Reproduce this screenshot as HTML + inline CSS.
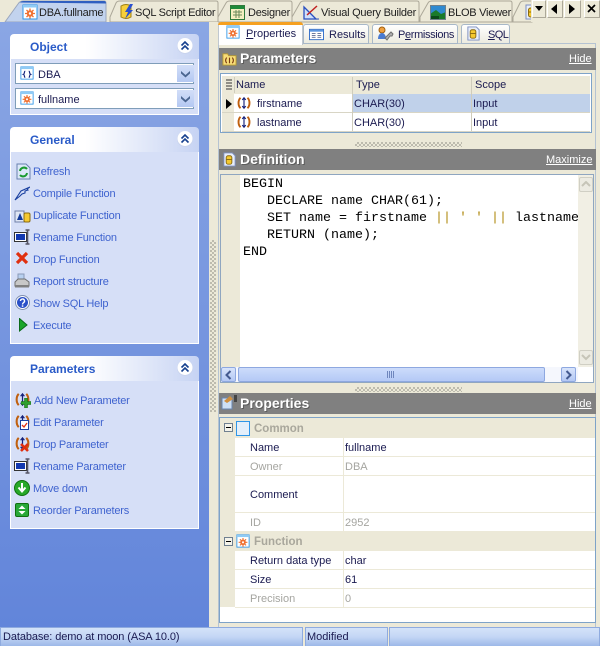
<!DOCTYPE html>
<html><head><meta charset="utf-8">
<style>
html,body{margin:0;padding:0}
#r{position:relative;width:600px;height:646px;overflow:hidden;background:#ece9d8;font:11px/14px "Liberation Sans",sans-serif;color:#000}
#r div,#r svg{position:absolute}
.t{white-space:nowrap}
.lnk{color:#3f63cf;font-size:11px;left:33px;letter-spacing:-.2px;margin-top:1px}
.tb{font-size:11px;color:#202020;top:6px;letter-spacing:-.25px}
.pnl{left:10px;width:189px;background:#d6dff7;border-left:1px solid #fff;border-right:1px solid #fff;border-bottom:1px solid #fff;box-sizing:border-box}
.ph{left:10px;width:189px;height:25px;border-radius:4px 4px 0 0;background:linear-gradient(90deg,#fff 40%,#c6d3f3)}
.pt{left:30px;color:#2a5bc8;font-weight:bold;font-size:12px}
.cb{left:15px;width:177px;height:19px;background:#fff;border:1px solid #7f9db9}
.bar{left:219px;width:377px;background:#808080}
.bart{left:240px;color:#fff;font-weight:bold;font-size:14px;text-shadow:1px 1px 0 #5c5c5c}
.barl{color:#fff;text-decoration:underline;font-size:11px}
.dots{height:5px;background:repeating-conic-gradient(#bdbbae 0 25%,#ece9d8 0 50%) 0 0/4px 4px}
.code{left:243px;font:13.33px/17px "Liberation Mono",monospace;white-space:pre}
.code b{font-weight:normal;color:#b08a10}
.pn{left:250px;margin-top:1px}.pv{left:345px;margin-top:1px}.g{color:#a5a5a0}
.gh{color:#a9a79c;font-weight:bold;font-size:11.5px;left:254px;margin-top:1px}
.st{top:627px;height:19px;background:linear-gradient(#d4e3f9,#c3d6f5 50%,#9db8e8);border:1px solid #8fabdf;border-bottom:0;box-sizing:border-box}
.btn{top:0;height:18px;background:#ece9d8;border:1px solid #fff;border-right-color:#aca899;border-bottom-color:#aca899;box-sizing:border-box}
.gridt{color:#1a1a50}
.drop{width:17px;height:17px;background:linear-gradient(#d2def8,#b4c8f2);top:0}
</style></head><body><div id="r">
<svg width="0" height="0" style="left:0;top:0"><defs>
<symbol id="fn" viewBox="0 0 16 16"><rect x="1" y="1" width="14" height="14" fill="#fff" stroke="#2f96e8"/><rect x="1" y="1" width="14" height="2.500" fill="#8fcbf5"/><circle cx="8" cy="9.500" r="3.200" fill="#f07030"/><path d="M8 4.500v10M3 9.500h10M4.500 6l7 7M11.500 6l-7 7" stroke="#f07030" stroke-width="1.300"/><circle cx="8" cy="9.500" r="1.200" fill="#fff"/></symbol>
<symbol id="sch" viewBox="0 0 16 16"><rect x="1" y="1" width="14" height="14" fill="#fff" stroke="#2f96e8"/><rect x="1" y="1" width="14" height="2.500" fill="#8fcbf5"/><path d="M6 6C4.500 6 5.500 9 4 9.500 5.500 10 4.500 13 6 13M10 6c1.500 0 .5 3 2 3.500C10.500 10 11.500 13 10 13" fill="none" stroke="#10207a" stroke-width="1.300"/></symbol>
<symbol id="par" viewBox="0 0 16 16"><path d="M4 2C1 5 1 11 4 14M12 2c3 3 3 9 0 12" fill="none" stroke="#c0600f" stroke-width="2.200"/><path d="M8 2v12M6 4.500 8 2l2 2.500M6 11.500 8 14l2-2.500" fill="none" stroke="#14207a" stroke-width="1.300"/></symbol>
<symbol id="sql" viewBox="0 0 16 16"><path d="M2 1h9l3 3v11H2z" fill="#e8eefa" stroke="#7d8fc0"/><rect x="4.500" y="4" width="6" height="9" rx="2" fill="#f5c92f" stroke="#8a6a10"/><path d="M4.500 8h6" stroke="#8a6a10"/></symbol>
<symbol id="fold" viewBox="0 0 16 16"><path d="M1 3h5l1 2h8v10H1z" fill="#f7dc78" stroke="#b89a30"/><path d="M5 7C3.500 9 3.500 11 5 13M11 7c1.500 2 1.500 4 0 6M8 7v6" fill="none" stroke="#7a3a10" stroke-width="1.200"/></symbol>
<symbol id="res" viewBox="0 0 16 16"><rect x=".5" y="2.500" width="15" height="11" fill="#fff" stroke="#2f6cc8"/><rect x="1" y="3" width="14" height="2" fill="#5a96e0"/><path d="M3 7h4M3 9h4M3 11h4M9 7h4M9 9h4M9 11h4" stroke="#5a6a90"/></symbol>
<symbol id="perm" viewBox="0 0 18 16"><circle cx="5" cy="4" r="3" fill="#f0a040" stroke="#a06010"/><path d="M1 13c0-4 2-6 4-6s4 2 4 6z" fill="#4a7ad0"/><path d="M8 12l6-6 2 2-1 2-2 0-3 4z" fill="#b0b0b0" stroke="#707070"/></symbol>
<symbol id="up" viewBox="0 0 18 18"><circle cx="9" cy="9" r="8" fill="#c9d4ee"/><circle cx="9" cy="8.500" r="7.500" fill="#fff"/><path d="M5.500 8.500 9 5l3.500 3.500M5.500 12.500 9 9l3.500 3.500" fill="none" stroke="#16408e" stroke-width="1.600"/></symbol>
<symbol id="dn" viewBox="0 0 17 17"><path d="M4 6l4.500 4L13 6v2.500L8.500 12.500 4 8.500z" fill="#4a6590"/></symbol>
<symbol id="ren" viewBox="0 0 16 16"><rect x=".5" y="3.500" width="12" height="9" fill="#fff" stroke="#333"/><rect x="2" y="5" width="9" height="6" fill="#1238b0"/><path d="M13.500 1v14M11.500 1h4M11.500 15h4" stroke="#556" stroke-width="1.600"/></symbol>
</defs></svg>

<!-- tab strip -->
<svg style="left:0;top:0" width="600" height="23">
<path d="M110 22V17L116 3Q117 1 120 1H216Q218 1 218 3V22Z" fill="#ece9d8" stroke="#aca899"/>
<path d="M218 22V17L226 3Q227 1 230 1H290Q292 1 292 3V22Z" fill="#ece9d8" stroke="#aca899"/>
<path d="M292 22V17L300 3Q301 1 304 1H417Q419 1 419 3V22Z" fill="#ece9d8" stroke="#aca899"/>
<path d="M420 22V17L428 3Q429 1 432 1H510Q512 1 512 3V22Z" fill="#ece9d8" stroke="#aca899"/>
<path d="M513 22V17L520 3Q521 1 524 1H532V22Z" fill="#ece9d8" stroke="#aca899"/>
<path d="M5 22 18 4Q20 1 23 1H104Q106 1 106 3V22Z" fill="#c2d3ee" stroke="#9aa6bc"/>
<path d="M20 2.500Q21 1 24 1H104Q106 1 106 3.500Z" fill="#2f5fc0"/>
</svg>
<svg style="left:22px;top:4px" width="16" height="16"><use href="#fn"/></svg>
<div class="t tb" style="left:39px">DBA.fullname</div>
<svg style="left:119px;top:3px" width="17" height="17" viewBox="0 0 17 17"><path d="M2 3Q7 0 12 3V14Q7 17 2 14Z" fill="#f7cf3a" stroke="#a08010"/><path d="M11 1 6 9h3l-3 7 8-9h-3l3-6z" fill="#2a50d0"/></svg>
<div class="t tb" style="left:135px">SQL Script Editor</div>
<svg style="left:230px;top:5px" width="15" height="15" viewBox="0 0 15 15"><rect x=".5" y=".5" width="14" height="14" fill="#f4eec0" stroke="#2f7a3a"/><rect x="1" y="1" width="13" height="3" fill="#1f8a3a"/><path d="M3 7h9M3 10h9M6 5v8M9 5v8" stroke="#6a8a5a"/></svg>
<div class="t tb" style="left:248px">Designer</div>
<svg style="left:303px;top:4px" width="17" height="16" viewBox="0 0 17 16"><path d="M1 15V3l12 12z" fill="#cfe0fa" stroke="#2a50c0" stroke-width="1.300"/><path d="M4 11 14 2" stroke="#c02020" stroke-width="1.500"/><path d="M1 15h15" stroke="#2a50c0"/></svg>
<div class="t tb" style="left:321px">Visual Query Builder</div>
<svg style="left:430px;top:5px" width="16" height="15" viewBox="0 0 16 15"><rect width="16" height="15" fill="#2f8ad0"/><path d="M0 9 6 5l5 4 5-2v8H0z" fill="#1a7a2a"/><rect x="0" y="11" width="9" height="4" fill="#0a4a1a"/><rect x=".5" y=".5" width="15" height="14" fill="none" stroke="#70808a"/></svg>
<div class="t tb" style="left:448px">BLOB Viewer</div>
<svg style="left:524px;top:4px" width="16" height="16"><use href="#sql"/></svg>
<div style="left:531px;top:0;width:69px;height:22px;background:#ece9d8"></div>
<div class="btn" style="left:532px;width:14px"></div>
<svg style="left:534px;top:6px" width="10" height="6"><path d="M1 0h8L5 5z" fill="#000"/></svg>
<div class="btn" style="left:547px;width:16px"></div>
<svg style="left:551px;top:4px" width="7" height="10"><path d="M6 0v10L0 5z" fill="#000"/></svg>
<div class="btn" style="left:564px;width:17px"></div>
<svg style="left:569px;top:4px" width="7" height="10"><path d="M0 0v10l6-5z" fill="#000"/></svg>
<div class="btn" style="left:584px;width:16px"></div>
<svg style="left:587px;top:4px" width="10" height="10"><path d="M1 1l7 7M8 1 1 8" stroke="#000" stroke-width="1.700"/></svg>

<!-- left side -->
<div style="left:0;top:22px;width:209px;height:605px;background:linear-gradient(#8aa6e4,#6285da)"></div>
<div style="left:209px;top:22px;width:9px;height:605px;background:#ece9d8"></div>
<div style="left:210px;top:240px;width:6px;height:172px;background:repeating-conic-gradient(#bdbbae 0 25%,#ece9d8 0 50%) 0 0/4px 4px"></div>

<div class="pnl" style="top:59px;height:56px"></div>
<div class="ph" style="top:34px"></div>
<div class="t pt" style="top:40px">Object</div>
<svg style="left:176px;top:37px" width="18" height="18"><use href="#up"/></svg>
<div class="cb" style="top:63px"></div><div class="cb" style="top:88px"></div>
<svg style="left:20px;top:66px" width="14" height="14"><use href="#sch"/></svg>
<div class="t" style="left:38px;top:68px;color:#1a1a50">DBA</div>
<div class="drop" style="left:177px;top:65px"></div><svg style="left:177px;top:65px" width="17" height="17"><use href="#dn"/></svg>
<svg style="left:20px;top:91px" width="14" height="14"><use href="#fn"/></svg>
<div class="t" style="left:38px;top:93px;color:#1a1a50">fullname</div>
<div class="drop" style="left:177px;top:90px"></div><svg style="left:177px;top:90px" width="17" height="17"><use href="#dn"/></svg>

<div class="pnl" style="top:152px;height:192px"></div>
<div class="ph" style="top:127px"></div>
<div class="t pt" style="top:133px">General</div>
<svg style="left:176px;top:130px" width="18" height="18"><use href="#up"/></svg>
<svg style="left:16px;top:163px" width="15" height="17" viewBox="0 0 15 17"><path d="M1 1h9l4 4v11H1z" fill="#dbe8f8" stroke="#6a80b0"/><path d="M4 8a4 4 0 0 1 7-2M11 10a4 4 0 0 1-7 2" fill="none" stroke="#1a9a30" stroke-width="2"/></svg>
<div class="t lnk" style="top:164px">Refresh</div>
<svg style="left:14px;top:186px" width="16" height="15" viewBox="0 0 16 15"><path d="M1 14 7 5l9-4-3 2 1 1-3 1 0 2-3 1-2 2z" fill="#d6dff7" stroke="#1a40a0" stroke-width="1.100"/></svg>
<div class="t lnk" style="top:186px">Compile Function</div>
<svg style="left:14px;top:207px" width="17" height="16" viewBox="0 0 17 16"><path d="M1 4h9v11H1z" fill="#dfe6f5" stroke="#7080a8"/><path d="M3 13 6 6l3 7z" fill="#123a9a"/><rect x="10" y="6" width="6" height="9" rx="1.500" fill="#f5c92f" stroke="#8a6a10"/></svg>
<div class="t lnk" style="top:208px">Duplicate Function</div>
<svg style="left:14px;top:229px" width="16" height="16"><use href="#ren"/></svg>
<div class="t lnk" style="top:230px">Rename Function</div>
<svg style="left:15px;top:251px" width="14" height="14" viewBox="0 0 14 14"><path d="M2 2l10 10M12 2 2 12" stroke="#e03010" stroke-width="3.200"/></svg>
<div class="t lnk" style="top:252px">Drop Function</div>
<svg style="left:14px;top:273px" width="16" height="16" viewBox="0 0 16 16"><rect x="4" y="1" width="6" height="6" fill="#b8d0f0" stroke="#8a9ab8"/><path d="M1 9l3-3h7l4 3v4H1z" fill="#c8c8c8" stroke="#707070"/><rect x="1" y="12" width="14" height="2.500" fill="#808080"/></svg>
<div class="t lnk" style="top:274px">Report structure</div>
<svg style="left:15px;top:295px" width="15" height="15" viewBox="0 0 15 15"><circle cx="7.500" cy="7.500" r="7" fill="#fff" stroke="#8090b0"/><circle cx="7.500" cy="7.500" r="5.500" fill="#2a50c8"/><path d="M5.500 6a2 2 0 1 1 3 1.700c-.8.500-1 .8-1 1.800" fill="none" stroke="#fff" stroke-width="1.400"/><rect x="6.800" y="10.300" width="1.500" height="1.500" fill="#fff"/></svg>
<div class="t lnk" style="top:296px">Show SQL Help</div>
<svg style="left:19px;top:318px" width="9" height="14"><path d="M.5.500 8 7 .5 13z" fill="#1aa52a" stroke="#0a6a1a"/></svg>
<div class="t lnk" style="top:318px">Execute</div>

<div class="pnl" style="top:381px;height:148px"></div>
<div class="ph" style="top:356px"></div>
<div class="t pt" style="top:362px">Parameters</div>
<svg style="left:176px;top:359px" width="18" height="18"><use href="#up"/></svg>
<svg style="left:15px;top:392px" width="15" height="15"><use href="#par"/></svg>
<svg style="left:21px;top:398px" width="10" height="10"><path d="M3.500 0h3v3.500H10v3H6.500V10h-3V6.500H0v-3h3.500z" fill="#30a030" stroke="#106010" stroke-width=".5"/></svg>
<div class="t lnk" style="top:393px;left:34px">Add New Parameter</div>
<svg style="left:15px;top:414px" width="15" height="15"><use href="#par"/></svg>
<svg style="left:20px;top:420px" width="9" height="10"><rect x=".5" y=".5" width="8" height="9" fill="#fff" stroke="#1a40a0"/><path d="M2 5l2 2 3-4" fill="none" stroke="#e03010" stroke-width="1.300"/></svg>
<div class="t lnk" style="top:415px">Edit Parameter</div>
<svg style="left:15px;top:436px" width="15" height="15"><use href="#par"/></svg>
<svg style="left:20px;top:443px" width="9" height="9"><path d="M1 1l7 7M8 1 1 8" stroke="#e03010" stroke-width="2.600"/></svg>
<div class="t lnk" style="top:437px">Drop Parameter</div>
<svg style="left:14px;top:458px" width="16" height="16"><use href="#ren"/></svg>
<div class="t lnk" style="top:459px">Rename Parameter</div>
<svg style="left:14px;top:480px" width="16" height="16" viewBox="0 0 16 16"><circle cx="8" cy="8" r="7.500" fill="#28a828" stroke="#107010"/><path d="M8 3v8M4.500 7.500 8 11.500l3.500-4" fill="none" stroke="#fff" stroke-width="2"/></svg>
<div class="t lnk" style="top:481px">Move down</div>
<svg style="left:15px;top:503px" width="14" height="14" viewBox="0 0 14 14"><rect x=".5" y=".5" width="13" height="13" rx="1.500" fill="#28a838" stroke="#107010"/><path d="M3.500 6 7 2.500 10.500 6zM3.500 8 7 11.500 10.500 8z" fill="#fff"/></svg>
<div class="t lnk" style="top:503px">Reorder Parameters</div>

<!-- right subtabs -->
<div style="left:218px;top:43px;width:378px;height:584px;background:#ece9d8;border:1px solid #b5c3d2;border-bottom:0;box-sizing:border-box"></div>
<div style="left:218px;top:22px;width:85px;height:23px;background:#fff;border-radius:3px 3px 0 0;border-left:1px solid #c0c8d0;border-right:1px solid #c0c8d0;box-sizing:border-box"></div>
<div style="left:218px;top:22px;width:85px;height:3px;background:#f5a020;border-radius:3px 3px 0 0"></div>
<svg style="left:226px;top:25px" width="14" height="14"><use href="#fn"/></svg>
<div class="t" style="left:246px;top:27px;color:#1a1a50"><u>P</u>roperties</div>
<div style="left:303px;top:24px;width:66px;height:20px;background:linear-gradient(#fff,#ecebe0);border:1px solid #a8b8c8;border-radius:3px 3px 0 0;box-sizing:border-box"></div>
<svg style="left:309px;top:27px" width="15" height="15"><use href="#res"/></svg>
<div class="t" style="left:329px;top:28px;color:#1a1a50">Results</div>
<div style="left:372px;top:24px;width:86px;height:20px;background:linear-gradient(#fff,#ecebe0);border:1px solid #a8b8c8;border-radius:3px 3px 0 0;box-sizing:border-box"></div>
<svg style="left:377px;top:26px" width="18" height="16"><use href="#perm"/></svg>
<div class="t" style="left:398px;top:28px;color:#1a1a50;letter-spacing:-.35px">P<u>e</u>rmissions</div>
<div style="left:461px;top:24px;width:49px;height:20px;background:linear-gradient(#fff,#ecebe0);border:1px solid #a8b8c8;border-radius:3px 3px 0 0;box-sizing:border-box"></div>
<svg style="left:466px;top:26px" width="15" height="15"><use href="#sql"/></svg>
<div class="t" style="left:488px;top:28px;color:#1a1a50;letter-spacing:-.6px"><u>S</u>QL</div>

<!-- parameters -->
<div class="bar" style="top:48px;height:22px"></div>
<svg style="left:222px;top:51px" width="15" height="15"><use href="#fold"/></svg>
<div class="t bart" style="top:51px">Parameters</div>
<div class="t barl" style="left:569px;top:52px">Hide</div>
<div style="left:220px;top:73px;width:372px;height:60px;background:#fff;border:1px solid #7ea3c8;box-sizing:border-box"></div>
<div style="left:222px;top:76px;width:368px;height:18px;background:#ece9d8"></div>
<div style="left:222px;top:94px;width:12px;height:37px;background:#ece9d8"></div>
<div style="left:234px;top:94px;width:118px;height:18px;background:#fff"></div>
<div style="left:352px;top:94px;width:238px;height:18px;background:#c0d1ea"></div>
<div style="left:222px;top:112px;width:368px;height:1px;background:#d8d5c5"></div>
<div style="left:222px;top:131px;width:368px;height:1px;background:#d8d5c5"></div>
<div style="left:352px;top:77px;width:1px;height:54px;background:#cfccbc"></div>
<div style="left:471px;top:77px;width:1px;height:54px;background:#cfccbc"></div>
<div style="left:234px;top:77px;width:1px;height:16px;background:#cfccbc"></div>
<svg style="left:225px;top:79px" width="8" height="12"><path d="M1 1h6M1 4h6M1 7h6M1 10h6" stroke="#333"/></svg>
<svg style="left:226px;top:99px" width="6" height="10"><path d="M0 0l6 5-6 5z" fill="#000"/></svg>
<div class="t gridt" style="left:236px;top:78px">Name</div>
<div class="t gridt" style="left:356px;top:78px">Type</div>
<div class="t gridt" style="left:475px;top:78px">Scope</div>
<svg style="left:237px;top:96px" width="14" height="14"><use href="#par"/></svg>
<div class="t gridt" style="left:257px;top:97px">firstname</div>
<div class="t gridt" style="left:354px;top:97px">CHAR(30)</div>
<div class="t gridt" style="left:473px;top:97px">Input</div>
<svg style="left:237px;top:115px" width="14" height="14"><use href="#par"/></svg>
<div class="t gridt" style="left:257px;top:116px">lastname</div>
<div class="t gridt" style="left:354px;top:116px">CHAR(30)</div>
<div class="t gridt" style="left:473px;top:116px">Input</div>
<div class="dots" style="left:355px;top:142px;width:107px"></div>

<!-- definition -->
<div class="bar" style="top:149px;height:21px"></div>
<svg style="left:222px;top:152px" width="15" height="15"><use href="#sql"/></svg>
<div class="t bart" style="top:152px">Definition</div>
<div class="t barl" style="left:546px;top:153px">Maximize</div>
<div style="left:220px;top:174px;width:374px;height:209px;background:#fff;border:1px solid #8fa6c0;box-sizing:border-box"></div>
<div style="left:221px;top:175px;width:19px;height:192px;background:#ece9d8"></div>
<div class="code" style="top:176px">BEGIN
   DECLARE name CHAR(61);
   SET name = firstname <b>||</b> <b>' '</b> <b>||</b> lastname
   RETURN (name);
END</div>
<div style="left:578px;top:175px;width:15px;height:192px;background:#f1efe4"></div>
<div style="left:579px;top:177px;width:14px;height:15px;background:#ecebe2;border:1px solid #d0cfc4;border-radius:2px;box-sizing:border-box"></div>
<svg style="left:581px;top:181px" width="10" height="7"><path d="M1 5 5 1l4 4" fill="none" stroke="#c6c5b8" stroke-width="2"/></svg>
<div style="left:579px;top:350px;width:14px;height:15px;background:#ecebe2;border:1px solid #d0cfc4;border-radius:2px;box-sizing:border-box"></div>
<svg style="left:581px;top:354px" width="10" height="7"><path d="M1 1l4 4 4-4" fill="none" stroke="#c6c5b8" stroke-width="2"/></svg>
<div style="left:221px;top:367px;width:357px;height:15px;background:#f5f7fd"></div>
<div style="left:221px;top:367px;width:15px;height:15px;background:linear-gradient(#d8e4fb,#b4c8f4);border:1px solid #8ea8e0;border-radius:2px;box-sizing:border-box"></div>
<svg style="left:225px;top:370px" width="7" height="10"><path d="M5.500 1 1.500 5l4 4" fill="none" stroke="#445a90" stroke-width="2"/></svg>
<div style="left:238px;top:367px;width:307px;height:15px;background:linear-gradient(#cddcfb,#b4c9f6);border:1px solid #8ea8e0;border-radius:2px;box-sizing:border-box"></div>
<svg style="left:387px;top:371px" width="8" height="7"><path d="M.5 0v7M2.500 0v7M4.500 0v7M6.500 0v7" stroke="#6f86bd"/></svg>
<div style="left:561px;top:367px;width:15px;height:15px;background:linear-gradient(#d8e4fb,#b4c8f4);border:1px solid #8ea8e0;border-radius:2px;box-sizing:border-box"></div>
<svg style="left:565px;top:370px" width="7" height="10"><path d="M1.500 1l4 4-4 4" fill="none" stroke="#445a90" stroke-width="2"/></svg>
<div class="dots" style="left:355px;top:387px;width:107px"></div>

<!-- properties -->
<div class="bar" style="top:393px;height:21px"></div>
<svg style="left:221px;top:395px" width="17" height="15" viewBox="0 0 17 15"><path d="M1 3h10v11H1z" fill="#cfe0f5" stroke="#6a86b0"/><path d="M3 6 9 1l3 3-6 4z" fill="#d09040"/><rect x="13" y="0" width="3" height="7" fill="#444"/></svg>
<div class="t bart" style="top:396px">Properties</div>
<div class="t barl" style="left:569px;top:397px">Hide</div>
<div style="left:219px;top:417px;width:377px;height:206px;background:#fff;border:1px solid #7ea3c8;box-sizing:border-box"></div>
<div style="left:220px;top:418px;width:375px;height:20px;background:#ece9d8"></div>
<div style="left:220px;top:438px;width:15px;height:169px;background:#ece9d8"></div>
<div style="left:220px;top:531px;width:375px;height:20px;background:#ece9d8"></div>
<div style="left:235px;top:456px;width:360px;height:1px;background:#ece9d8"></div>
<div style="left:235px;top:475px;width:360px;height:1px;background:#ece9d8"></div>
<div style="left:235px;top:512px;width:360px;height:1px;background:#ece9d8"></div>
<div style="left:235px;top:569px;width:360px;height:1px;background:#ece9d8"></div>
<div style="left:235px;top:588px;width:360px;height:1px;background:#ece9d8"></div>
<div style="left:235px;top:607px;width:360px;height:1px;background:#ece9d8"></div>
<div style="left:343px;top:438px;width:1px;height:93px;background:#ece9d8"></div>
<div style="left:343px;top:551px;width:1px;height:56px;background:#ece9d8"></div>
<svg style="left:224px;top:423px" width="9" height="9"><rect x=".5" y=".5" width="8" height="8" fill="#f4f3ea" stroke="#708090"/><path d="M2 4.500h5" stroke="#000"/></svg>
<svg style="left:236px;top:421px" width="14" height="15"><rect x=".5" y=".5" width="13" height="14" fill="#e4effa" stroke="#2f96e8"/></svg>
<div class="t gh" style="top:421px">Common</div>
<svg style="left:224px;top:537px" width="9" height="9"><rect x=".5" y=".5" width="8" height="8" fill="#f4f3ea" stroke="#708090"/><path d="M2 4.500h5" stroke="#000"/></svg>
<svg style="left:236px;top:534px" width="14" height="14"><use href="#fn"/></svg>
<div class="t gh" style="top:534px">Function</div>
<div class="t pn" style="top:440px;color:#1a1a50">Name</div><div class="t pv" style="top:440px;color:#1a1a50">fullname</div>
<div class="t pn g" style="top:459px">Owner</div><div class="t pv g" style="top:459px">DBA</div>
<div class="t pn" style="top:487px;color:#1a1a50">Comment</div>
<div class="t pn g" style="top:515px">ID</div><div class="t pv g" style="top:515px">2952</div>
<div class="t pn" style="top:553px;color:#1a1a50">Return data type</div><div class="t pv" style="top:553px;color:#1a1a50">char</div>
<div class="t pn" style="top:572px;color:#1a1a50">Size</div><div class="t pv" style="top:572px;color:#1a1a50">61</div>
<div class="t pn g" style="top:591px">Precision</div><div class="t pv g" style="top:591px">0</div>

<!-- status -->
<div class="st" style="left:0;width:303px"></div>
<div class="st" style="left:305px;width:83px"></div>
<div class="st" style="left:389px;width:211px"></div>
<div class="t" style="left:3px;top:630px;color:#1a1a50;letter-spacing:-.1px">Database: demo at moon (ASA 10.0)</div>
<div class="t" style="left:307px;top:630px;color:#1a1a50">Modified</div>
</div></body></html>
